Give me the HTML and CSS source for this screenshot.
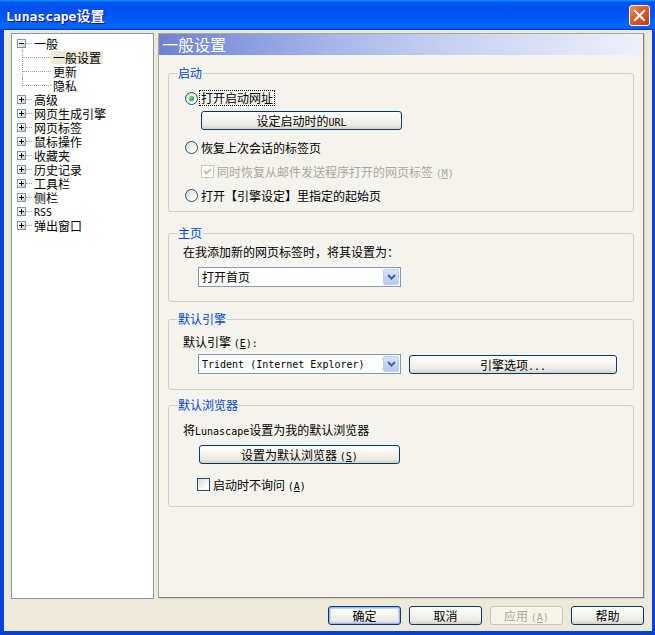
FILE: index.html
```html
<!DOCTYPE html>
<html lang="zh-CN">
<head>
    <meta charset="UTF-8">
    <title>Lunascape设置</title>
    <link rel="stylesheet" href="styles.css">
</head>
<body>
    <div class="window">
        <div class="titlebar">
            <span class="title"><span class="en-title">Lunascape</span>设置</span>
            <span class="close">
                <svg width="19" height="19" viewBox="0 0 19 19"><path d="M5 5L14 14M14 5L5 14" stroke="#fff" stroke-width="2.2" stroke-linecap="square"/></svg>
            </span>
        </div>
        <div class="frame">
            <div class="main">
                <ul class="tree">
                    <li class="row"><span class="exp"></span><span class="hl"></span><span class="tx">一般</span></li>
                    <li class="row"><span class="vl"></span><span class="hl long"></span><span class="tx sel">一般设置</span></li>
                    <li class="row"><span class="vl"></span><span class="hl long"></span><span class="tx">更新</span></li>
                    <li class="row"><span class="vl last"></span><span class="hl long"></span><span class="tx">隐私</span></li>
                    <li class="row"><span class="exp plus"></span><span class="hl"></span><span class="tx">高级</span></li>
                    <li class="row"><span class="exp plus"></span><span class="hl"></span><span class="tx">网页生成引擎</span></li>
                    <li class="row"><span class="exp plus"></span><span class="hl"></span><span class="tx">网页标签</span></li>
                    <li class="row"><span class="exp plus"></span><span class="hl"></span><span class="tx">鼠标操作</span></li>
                    <li class="row"><span class="exp plus"></span><span class="hl"></span><span class="tx">收藏夹</span></li>
                    <li class="row"><span class="exp plus"></span><span class="hl"></span><span class="tx">历史记录</span></li>
                    <li class="row"><span class="exp plus"></span><span class="hl"></span><span class="tx">工具栏</span></li>
                    <li class="row"><span class="exp plus"></span><span class="hl"></span><span class="tx">侧栏</span></li>
                    <li class="row"><span class="exp plus"></span><span class="hl"></span><span class="tx"><span class="en">RSS</span></span></li>
                    <li class="row"><span class="exp plus"></span><span class="hl"></span><span class="tx">弹出窗口</span></li>
                </ul>

                <div class="panel">
                    <div class="panel-title">一般设置</div>

                    <fieldset class="group g-start">
                        <legend>启动</legend>
                        <div class="opt first">
                            <span class="radio checked"></span>
                            <span class="focus">打开启动网址</span>
                        </div>
                        <div class="btn btn-url">设定启动时的<span class="en">URL</span></div>
                        <div class="opt gap9">
                            <span class="radio"></span>
                            <span class="lbl">恢复上次会话的标签页</span>
                        </div>
                        <div class="opt sub gap8 disabled">
                            <span class="check dis">
                                <svg width="11" height="11" viewBox="0 0 11 11"><path d="M2 5L4.5 7.5L9 3" fill="none" stroke="#c4c2b4" stroke-width="2"/></svg>
                            </span>
                            <span class="lbl">同时恢复从邮件发送程序打开的网页标签 <span class="en">(<u>M</u>)</span></span>
                        </div>
                        <div class="opt gap8">
                            <span class="radio"></span>
                            <span class="lbl">打开【引擎设定】里指定的起始页</span>
                        </div>
                    </fieldset>

                    <fieldset class="group g-home">
                        <legend>主页</legend>
                        <div class="text-row">在我添加新的网页标签时，将其设置为：</div>
                        <div class="combo combo-home">
                            <span class="combo-text">打开首页</span>
                            <span class="combo-btn"><svg width="9" height="6" viewBox="0 0 9 6"><path d="M1 1L4.5 4.5L8 1" fill="none" stroke="#4d6185" stroke-width="2"/></svg></span>
                        </div>
                    </fieldset>

                    <fieldset class="group g-engine">
                        <legend>默认引擎</legend>
                        <div class="text-row">默认引擎 <span class="en">(<u>E</u>):</span></div>
                        <div class="engine-row">
                            <div class="combo">
                                <span class="combo-text"><span class="en">Trident (Internet Explorer)</span></span>
                                <span class="combo-btn"><svg width="9" height="6" viewBox="0 0 9 6"><path d="M1 1L4.5 4.5L8 1" fill="none" stroke="#4d6185" stroke-width="2"/></svg></span>
                            </div>
                            <div class="btn btn-engine">引擎选项<span class="en">...</span></div>
                        </div>
                    </fieldset>

                    <fieldset class="group g-browser">
                        <legend>默认浏览器</legend>
                        <div class="text-row">将<span class="en">Lunascape</span>设置为我的默认浏览器</div>
                        <div class="btn btn-default">设置为默认浏览器 <span class="en">(<u>S</u>)</span></div>
                        <div class="opt ask">
                            <span class="check"></span>
                            <span class="lbl">启动时不询问 <span class="en">(<u>A</u>)</span></span>
                        </div>
                    </fieldset>
                </div>
            </div>

            <div class="footer">
                <div class="btn btn-foot default">确定</div>
                <div class="btn btn-foot">取消</div>
                <div class="btn btn-foot off">应用 <span class="en">(<u>A</u>)</span></div>
                <div class="btn btn-foot">帮助</div>
            </div>
        </div>
    </div>
</body>
</html>
```

FILE: styles.css
```css
* {
    box-sizing: border-box;
}
body {
    margin: 0;
    font-family: "Noto Sans CJK SC", sans-serif;
    font-size: 12px;
    color: #000;
}
.en {
    font-family: "DejaVu Sans Mono", "Liberation Mono", monospace;
    font-size: 10px;
}
u {
    text-underline-offset: 1px;
}

/* window frame */
.window {
    width: 655px;
    height: 635px;
    display: flex;
    flex-direction: column;
}
.titlebar {
    height: 30px;
    flex: none;
    display: flex;
    align-items: center;
    justify-content: space-between;
    padding: 0 5px 0 6px;
    background: linear-gradient(#0997ff, #0053ee 8%, #0050ee 40%, #0066ff 88%, #0066ff 93%, #005bff 95%, #003dd7 96%, #003dd7);
}
.title {
    color: #fff;
    font-size: 14px;
    font-weight: bold;
    text-shadow: 1px 1px #0f1089;
}
.en-title {
    font-family: "DejaVu Sans Mono", monospace;
    font-size: 13px;
    font-weight: bold;
}
.close {
    width: 21px;
    height: 21px;
    border: 1px solid #fff;
    border-radius: 3px;
    background: linear-gradient(135deg, #f0936a 0%, #e2602f 35%, #d2481c 75%, #b83a10 100%);
    display: flex;
    align-items: center;
    justify-content: center;
}
.frame {
    flex: 1;
    display: flex;
    flex-direction: column;
    background: #ece9d8;
    border-style: solid;
    border-color: #0841d8;
    border-width: 0 3px 4px 4px;
    padding: 3px 8px 0 7px;
}
.main {
    display: flex;
    gap: 4px;
    align-items: flex-start;
}

/* tree */
.tree {
    list-style: none;
    margin: 0;
    width: 143px;
    height: 566px;
    border: 1px solid #7f9db9;
    background: #fff;
    padding: 2px 0 0 5px;
}
.row {
    height: 14px;
    display: flex;
    align-items: center;
}
.exp {
    position: relative;
    width: 9px;
    height: 9px;
    border: 1px solid #7898b5;
    background: linear-gradient(135deg, #fff 30%, #c6c3b8);
    flex: none;
}
.exp::before {
    content: "";
    position: absolute;
    left: 1px;
    top: 3px;
    width: 5px;
    height: 1px;
    background: #000;
}
.exp.plus::after {
    content: "";
    position: absolute;
    left: 3px;
    top: 1px;
    width: 1px;
    height: 5px;
    background: #000;
}
.hl {
    width: 6px;
    border-top: 1px dotted #a0a0a0;
    flex: none;
}
.hl.long {
    width: 28px;
}
.vl {
    width: 1px;
    height: 14px;
    margin-left: 5px;
    border-left: 1px dotted #a0a0a0;
    align-self: flex-start;
    flex: none;
}
.vl.last {
    height: 8px;
}
.tx {
    padding: 0 2px;
    line-height: 13px;
    white-space: nowrap;
}
.tx.sel {
    background: #ece9d8;
}

/* right panel */
.panel {
    width: 486px;
    height: 565px;
    background: #f4f3ee;
    border: 1px solid #aca899;
    border-right-color: #808080;
    border-bottom-color: #808080;
    box-shadow: 1px 1px 0 #d6d3c6;
}
.panel-title {
    height: 21px;
    line-height: 21px;
    padding-left: 3px;
    font-size: 16px;
    color: #fff;
    background: linear-gradient(to right, #6d82d3 0%, #a5b5e8 35%, #c6d1f1 60%, #eef1fb 100%);
}
.group {
    margin: 0 9px;
    padding: 0 0 0 16px;
    min-width: 0;
    border: 1px solid #d0d0bf;
    border-radius: 3px;
}
.group legend {
    margin-left: -8px;
    padding: 0 1px;
    line-height: 14px;
    color: #0046d5;
}
.g-start {
    margin-top: 11px;
    padding-top: 10px;
    padding-bottom: 8px;
}
.g-home {
    margin-top: 14px;
    padding-top: 4px;
    padding-bottom: 14px;
}
.g-engine {
    margin-top: 10px;
    padding-top: 8px;
    padding-bottom: 15px;
}
.g-browser {
    margin-top: 8px;
    padding-top: 10px;
    padding-bottom: 14px;
}

/* options */
.opt {
    height: 16px;
    display: flex;
    align-items: center;
}
.gap9 {
    margin-top: 9px;
}
.gap8 {
    margin-top: 8px;
}
.opt.sub {
    margin-left: 16px;
}
.opt.disabled .lbl {
    color: #aca899;
}
.opt.ask {
    margin-top: 12px;
    margin-left: 12px;
}
.radio {
    width: 13px;
    height: 13px;
    border: 1px solid #1c5180;
    border-radius: 50%;
    background: linear-gradient(135deg, #d6d4cc, #fff 75%);
    display: flex;
    align-items: center;
    justify-content: center;
    flex: none;
}
.radio.checked::after {
    content: "";
    width: 5px;
    height: 5px;
    border-radius: 50%;
    background: radial-gradient(circle at 35% 35%, #7de07a, #21a121 70%);
}
.check {
    width: 13px;
    height: 13px;
    border: 1px solid #1c5180;
    background: linear-gradient(135deg, #dcdbd4, #fff 80%);
    display: flex;
    align-items: center;
    justify-content: center;
    flex: none;
}
.check.dis {
    border-color: #cac8bb;
    background: #fff;
}
.focus {
    margin-left: 2px;
    padding: 0 1px;
    line-height: 14px;
    outline: 1px dotted #000;
}
.lbl {
    margin-left: 3px;
    white-space: nowrap;
}
.text-row {
    height: 16px;
    line-height: 16px;
    margin-left: -2px;
}

/* buttons */
.btn {
    height: 19px;
    line-height: 17px;
    text-align: center;
    border: 1px solid #003c74;
    border-radius: 3px;
    background: linear-gradient(#fff, #f5f4ef 45%, #ebe9e1 80%, #d6d0c5);
    white-space: nowrap;
}
.btn-url {
    width: 201px;
    margin: 5px 0 0 16px;
}
.btn-engine {
    width: 208px;
    height: 19px;
}
.btn-default {
    width: 201px;
    margin: 7px 0 0 14px;
}

/* combo boxes */
.combo {
    width: 203px;
    height: 20px;
    border: 1px solid #7f9db9;
    background: #fff;
    display: flex;
    align-items: center;
}
.combo-home {
    margin: 7px 0 0 13px;
}
.combo-text {
    flex: 1;
    padding-left: 3px;
    line-height: 18px;
    white-space: nowrap;
}
.combo-btn {
    width: 16px;
    height: 16px;
    margin-right: 1px;
    border: 1px solid #bccff8;
    border-radius: 2px;
    background: linear-gradient(#d7e3fe, #b5c9f6);
    display: flex;
    align-items: center;
    justify-content: center;
}
.engine-row {
    display: flex;
    align-items: center;
    gap: 8px;
    margin: 4px 0 0 13px;
}

/* footer */
.footer {
    display: flex;
    justify-content: flex-end;
    gap: 8px;
    margin-top: 7px;
}
.btn-foot {
    width: 73px;
}
.btn-foot.default {
    box-shadow: inset 0 0 0 1px #9db6ea, inset 0 0 0 2px #c5d6f7;
}
.btn-foot.off {
    border-color: #c9c7ba;
    background: #f5f4ea;
    color: #aca899;
}
```
